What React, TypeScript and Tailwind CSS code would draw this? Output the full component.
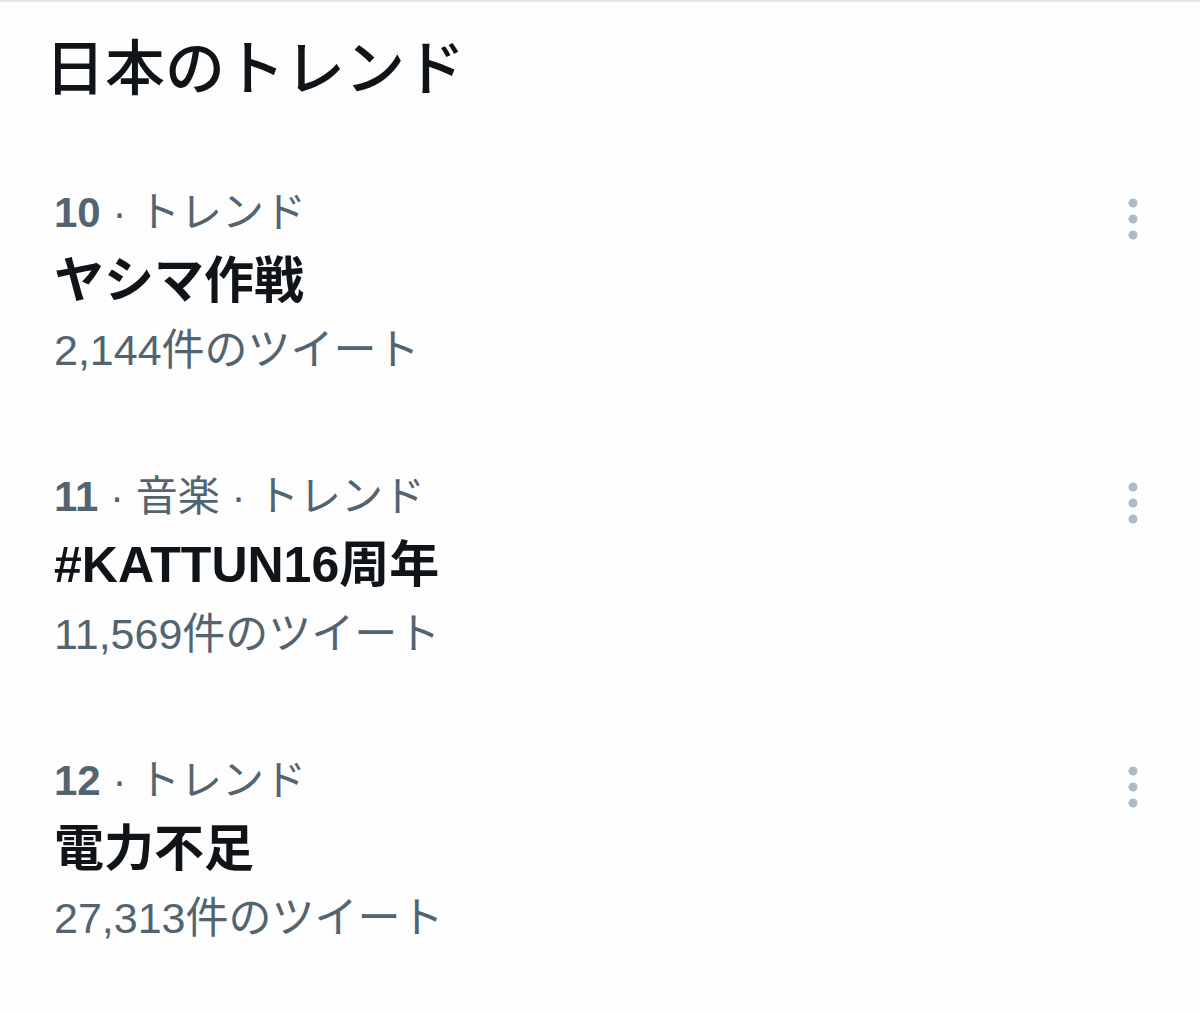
import React from 'react';

type Trend = {
  rank: number;
  category?: string;
  title: string;
  count: string;
};

const trends: Trend[] = [
  { rank: 10, title: 'ヤシマ作戦', count: '2,144' },
  { rank: 11, category: '音楽', title: '#KATTUN16周年', count: '11,569' },
  { rank: 12, title: '電力不足', count: '27,313' },
];

const MoreDots = () => (
  <svg width="20" height="44" viewBox="0 0 20 44" className="text-[#aebbc5]">
    <circle cx="10" cy="6" r="4.5" fill="currentColor" />
    <circle cx="10" cy="22" r="4.5" fill="currentColor" />
    <circle cx="10" cy="38" r="4.5" fill="currentColor" />
  </svg>
);

const TrendRow: React.FC<{ trend: Trend }> = ({ trend }) => (
  <div className="flex justify-between pl-[54px] pr-[57px] pt-[38px] pb-[39px]">
    <div className="flex flex-col">
      <div className="text-[42px] leading-[69px] text-[#536471]">
        <span className="font-bold">{trend.rank}</span>
        <span> · </span>
        {trend.category && (
          <>
            <span>{trend.category}</span>
            <span> · </span>
          </>
        )}
        <span>トレンド</span>
      </div>
      <div className="text-[50px] leading-[69px] font-bold text-[#0f1419]">{trend.title}</div>
      <div className="text-[43px] leading-[69px] text-[#536471]">{trend.count}件のツイート</div>
    </div>
    <div className="pt-[19px]">
      <MoreDots />
    </div>
  </div>
);

export default function App() {
  return (
    <div
      className="w-[1200px] h-[1013px] bg-[#fdfdfd] border-t-2 border-[#e3e6e8] overflow-hidden"
      style={{ fontFamily: '"Liberation Sans", "Noto Sans CJK JP", sans-serif' }}
    >
      <h1 className="pl-[45px] pt-[28px] text-[60px] leading-[80px] font-medium text-[#0f1419]">日本のトレンド</h1>
      <div className="mt-[30px]">
        {trends.map((t) => (
          <TrendRow key={t.rank} trend={t} />
        ))}
      </div>
    </div>
  );
}
